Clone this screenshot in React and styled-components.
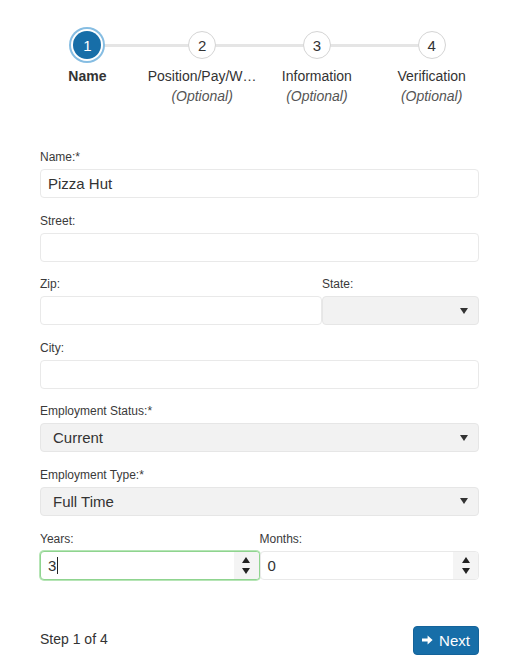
import React from "react";
import styled, { createGlobalStyle } from "styled-components";

const Global = createGlobalStyle`
  * { box-sizing: border-box; }
  html, body { margin: 0; padding: 0; background: #fff; }
  body { font-family: "Liberation Sans", Arial, sans-serif; color: #333; }
`;

const Page = styled.div`
  width: 524px;
  padding: 31px 45px 0 40px;
`;

const Stepper = styled.ol`
  list-style: none;
  margin: 0 -10px;
  padding: 0;
  display: grid;
  grid-template-columns: repeat(4, 1fr);
`;

const Step = styled.li`
  position: relative;
  display: flex;
  flex-direction: column;
  align-items: center;
  min-width: 0;
  &:not(:last-child)::after {
    content: "";
    position: absolute;
    top: 13px;
    left: 50%;
    width: 100%;
    height: 3px;
    background: #e5e5e5;
    z-index: 0;
  }
`;

const Circle = styled.div`
  position: relative;
  z-index: 1;
  width: 28px;
  height: 28px;
  border-radius: 50%;
  display: flex;
  align-items: center;
  justify-content: center;
  font-size: 15px;
  background: ${(p) => (p.$active ? "#176ea8" : "#fff")};
  color: ${(p) => (p.$active ? "#fff" : "#333")};
  border: ${(p) => (p.$active ? "none" : "1px solid #d4d4d4")};
  box-shadow: ${(p) => (p.$active ? "0 0 0 2px #fff, 0 0 0 4px #86bde2" : "none")};
`;

const StepTitle = styled.div`
  margin-top: 7px;
  font-size: 14px;
  line-height: 20px;
  font-weight: ${(p) => (p.$active ? "bold" : "normal")};
  color: #333;
  white-space: nowrap;
`;

const StepSub = styled.div`
  font-size: 14px;
  line-height: 20px;
  font-style: italic;
  color: #555;
`;

const Form = styled.div`
  margin-top: 43px;
  display: flex;
  flex-direction: column;
  gap: 14.6px;
`;

const Row = styled.div`
  display: grid;
  grid-template-columns: ${(p) => p.$cols || "1fr"};
`;

const Group = styled.div`
  display: flex;
  flex-direction: column;
  min-width: 0;
`;

const Label = styled.div`
  font-size: 12px;
  line-height: 16px;
  color: #3a3a3a;
  margin-bottom: 4px;
`;

const Input = styled.div`
  height: 29px;
  border: 1px solid ${(p) => (p.$focus ? "#8fd48f" : "#e9e9e9")};
  box-shadow: ${(p) => (p.$focus ? "0 0 0 1px #b6e5b6" : "none")};
  border-radius: 4px;
  background: #fff;
  display: flex;
  align-items: center;
  padding-left: 7px;
  font-size: 15px;
  color: #333;
`;

const Select = styled.div`
  height: 29px;
  border: 1px solid #e6e6e6;
  border-radius: 4px;
  background: #f2f2f2;
  display: flex;
  align-items: center;
  justify-content: space-between;
  padding: 0 10px 0 12px;
  font-size: 15px;
  color: #333;
`;

const Arrow = styled.span`
  width: 0;
  height: 0;
  border-left: 4.5px solid transparent;
  border-right: 4.5px solid transparent;
  border-top: 6px solid #333;
`;

const Value = styled.span`
  flex: 1;
  display: flex;
  align-items: center;
`;

const Caret = styled.span`
  display: inline-block;
  width: 1px;
  height: 17px;
  background: #222;
  margin-left: 1px;
`;

const Spinner = styled.div`
  width: 25px;
  align-self: stretch;
  background: #f4f4f4;
  display: flex;
  flex-direction: column;
  align-items: center;
  justify-content: center;
  gap: 5px;
  border-radius: 0 3px 3px 0;
`;

const Tri = styled.span`
  width: 0;
  height: 0;
  border-left: 4.5px solid transparent;
  border-right: 4.5px solid transparent;
  ${(p) => (p.$up ? "border-bottom: 6px solid #222;" : "border-top: 6px solid #222;")}
`;

const Footer = styled.div`
  margin-top: 46px;
  display: flex;
  align-items: center;
  justify-content: space-between;
`;

const StepCount = styled.div`
  font-size: 14px;
  color: #333;
  margin-top: -2px;
`;

const Button = styled.button`
  height: 29px;
  width: 66px;
  border: 1px solid #14639a;
  border-radius: 4px;
  background: #176ea8;
  color: #fff;
  font-family: inherit;
  font-size: 15px;
  display: flex;
  align-items: center;
  justify-content: center;
  gap: 6px;
  padding: 0;
`;

const steps = [
  { n: 1, title: "Name", active: true },
  { n: 2, title: "Position/Pay/W…", sub: "(Optional)" },
  { n: 3, title: "Information", sub: "(Optional)" },
  { n: 4, title: "Verification", sub: "(Optional)" },
];

function NumberField({ value, focus, caret }) {
  return (
    <Input $focus={focus} style={{ paddingRight: 0 }}>
      <Value>
        {value}
        {caret && <Caret />}
      </Value>
      <Spinner>
        <Tri $up />
        <Tri />
      </Spinner>
    </Input>
  );
}

export default function App() {
  return (
    <>
      <Global />
      <Page>
        <Stepper>
          {steps.map((s) => (
            <Step key={s.n}>
              <Circle $active={s.active}>{s.n}</Circle>
              <StepTitle $active={s.active}>{s.title}</StepTitle>
              {s.sub && <StepSub>{s.sub}</StepSub>}
            </Step>
          ))}
        </Stepper>

        <Form>
          <Group>
            <Label>Name:*</Label>
            <Input>Pizza Hut</Input>
          </Group>
          <Group>
            <Label>Street:</Label>
            <Input />
          </Group>
          <Row $cols="282fr 157fr">
            <Group>
              <Label>Zip:</Label>
              <Input />
            </Group>
            <Group>
              <Label>State:</Label>
              <Select>
                <span />
                <Arrow />
              </Select>
            </Group>
          </Row>
          <Group>
            <Label>City:</Label>
            <Input />
          </Group>
          <Group>
            <Label>Employment Status:*</Label>
            <Select>
              <span>Current</span>
              <Arrow />
            </Select>
          </Group>
          <Group>
            <Label>Employment Type:*</Label>
            <Select>
              <span>Full Time</span>
              <Arrow />
            </Select>
          </Group>
          <Row $cols="1fr 1fr">
            <Group>
              <Label>Years:</Label>
              <NumberField value="3" focus caret />
            </Group>
            <Group>
              <Label>Months:</Label>
              <NumberField value="0" />
            </Group>
          </Row>
        </Form>

        <Footer>
          <StepCount>Step 1 of 4</StepCount>
          <Button>
            <svg width="11" height="10" viewBox="0 0 11 10" aria-hidden="true">
              <path d="M0 3.6H5.6V0.6L10.6 5L5.6 9.4V6.4H0Z" fill="#fff" />
            </svg>
            Next
          </Button>
        </Footer>
      </Page>
    </>
  );
}
